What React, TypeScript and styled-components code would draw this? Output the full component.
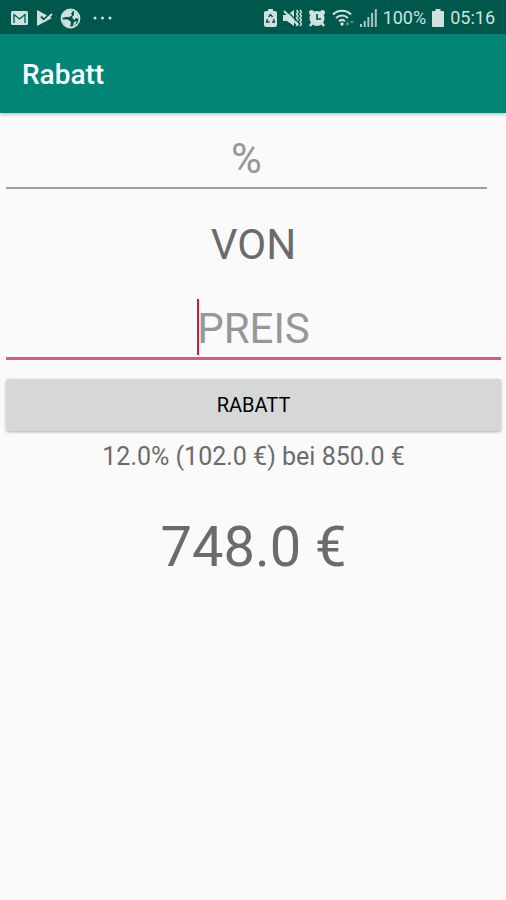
import React from "react";
import styled, { createGlobalStyle } from "styled-components";

const GlobalStyle = createGlobalStyle`
  *, *::before, *::after { box-sizing: border-box; }
  body {
    margin: 0;
    background: #fafafa;
    font-family: Roboto, "Liberation Sans", sans-serif;
  }
`;

const Screen = styled.div`
  min-height: 100vh;
  background: #fafafa;
  color: #6b6b6b;
`;

const StatusBar = styled.div`
  display: flex;
  justify-content: space-between;
  align-items: center;
  height: 34px;
  padding: 2px 11px 0 10px;
  background: #00574b;
  color: #cfe2de;
  font-size: 18px;
  line-height: 24px;
`;

const StatusGroup = styled.div<{ $gap: number }>`
  display: flex;
  align-items: center;
  gap: ${(p) => p.$gap}px;
`;

const Icon = styled.svg`
  display: block;
  flex: none;
  fill: currentColor;
`;

const MoreIcon = styled(Icon)`
  margin-left: 5px;
`;

const AppBar = styled.header`
  display: flex;
  align-items: center;
  height: 79px;
  padding: 3px 22px 0;
  background: #008577;
  box-shadow: 0 1px 4px rgba(0, 0, 0, 0.3);
`;

const Title = styled.h1`
  margin: 0;
  color: #fff;
  font-size: 28px;
  font-weight: 500;
  line-height: 32px;
`;

const Form = styled.form`
  display: flex;
  flex-direction: column;
  padding: 16px 5px 0 6px;
`;

const Field = styled.div<{ $active?: boolean }>`
  position: relative;
  margin-right: ${(p) => (p.$active ? 0 : 14)}px;
  border-bottom: ${(p) => (p.$active ? "3px solid #d65c78" : "2px solid #a0a0a0")};
`;

const TextInput = styled.input`
  display: block;
  width: 100%;
  height: 58px;
  padding: 0;
  border: 0;
  outline: 0;
  background: transparent;
  color: #6b6b6b;
  caret-color: transparent;
  font: 400 42px/56px Roboto, "Liberation Sans", sans-serif;
  text-align: center;
  &::placeholder {
    color: #979797;
    opacity: 1;
  }
`;

const Caret = styled.span`
  position: absolute;
  top: 0;
  left: calc(50% - 57px);
  width: 2px;
  height: 56px;
  background: #d1193f;
`;

const Joiner = styled.div`
  margin: 28px 0 26px;
  font-size: 42px;
  line-height: 56px;
  text-align: center;
`;

const SubmitButton = styled.button`
  height: 52px;
  margin-top: 19px;
  border: 0;
  border-radius: 3px;
  background: #d6d8d7;
  box-shadow: 0 1px 3px rgba(0, 0, 0, 0.3);
  color: #000;
  font: 400 20px/24px Roboto, "Liberation Sans", sans-serif;
`;

const Summary = styled.output`
  margin-top: 10px;
  font-size: 25px;
  line-height: 32px;
  text-align: center;
`;

const Total = styled.output`
  margin-top: 40px;
  font-size: 56px;
  line-height: 68px;
  text-align: center;
`;

const MailIcon = () => (
  <Icon width="19" height="16" viewBox="0 0 19 16">
    <rect x="1" y="1" width="17" height="14" rx="1.500" />
    <path d="M4 13V4.500l5.500 4.500L15 4.500V13" fill="none" stroke="#00574b" strokeWidth="1.300" />
  </Icon>
);

const PlayCheckIcon = () => (
  <Icon width="17" height="18" viewBox="0 0 17 18">
    <path d="M1 1l15 8L1 17z" />
    <path d="M5 7.500l3 3L15.500 3" fill="none" stroke="#00574b" strokeWidth="1.800" />
    <path d="M8 12.500L16 5" fill="none" stroke="currentColor" strokeWidth="1.800" />
  </Icon>
);

const GlobeIcon = () => (
  <Icon width="21" height="21" viewBox="0 0 21 21">
    <circle cx="10.500" cy="10.500" r="9" fill="none" stroke="currentColor" strokeWidth="1.800" />
    <path d="M2 8c1-3 4-5.500 8-6l3 1.500-2 2 1 2-3 1.500H5l-1 1-2-1z" />
    <path d="M2 11.500l6 0 3 2.500-1 5-4-1-3-4z" />
    <path d="M14 3l3 2 2 6-3-1-2 2-2-3 2-2zM14 14l3-1-2 4-2 1z" />
  </Icon>
);

const DotsIcon = () => (
  <MoreIcon width="20" height="4" viewBox="0 0 20 4">
    <circle cx="2" cy="2" r="1.500" />
    <circle cx="9.500" cy="2" r="1.500" />
    <circle cx="17" cy="2" r="1.500" />
  </MoreIcon>
);

const SaverIcon = () => (
  <Icon width="13" height="18" viewBox="0 0 13 18">
    <path d="M4 0h5v2h2a2 2 0 0 1 2 2v12a2 2 0 0 1-2 2H2a2 2 0 0 1-2-2V4a2 2 0 0 1 2-2h2z" />
    <path
      d="M4.500 8l2-2.500 2 2.500M9.500 10l1 3H8M5.500 13h-3l1-3"
      fill="none"
      stroke="#00574b"
      strokeWidth="1.400"
    />
  </Icon>
);

const MuteIcon = () => (
  <Icon width="19" height="18" viewBox="0 0 19 18">
    <path d="M0 6h4l7-5v16l-7-5H0z" />
    <path
      d="M13.500 1l1.500 2-1.500 2 1.500 2-1.500 2 1.500 2-1.500 2 1.500 2-1.500 2M17 1l1.500 2L17 5l1.500 2L17 9l1.500 2-1.500 2 1.500 2-1.500 2"
      fill="none"
      stroke="currentColor"
      strokeWidth="1.500"
    />
    <path d="M3 1l14 14" stroke="#00574b" strokeWidth="1.300" />
    <path d="M1 2l14 14" stroke="currentColor" strokeWidth="2" />
  </Icon>
);

const AlarmIcon = () => (
  <Icon width="18" height="18" viewBox="0 0 18 18">
    <circle cx="9" cy="9.500" r="7.500" />
    <circle cx="3.500" cy="3.500" r="2.500" />
    <circle cx="14.500" cy="3.500" r="2.500" />
    <path d="M2 17l3-4M16 17l-3-4" stroke="currentColor" strokeWidth="2.500" />
    <path d="M9 5v5h4" fill="none" stroke="#00574b" strokeWidth="1.700" />
  </Icon>
);

const WifiIcon = () => (
  <Icon width="22" height="18" viewBox="0 0 22 18">
    <path
      d="M1 5.500c5-5 13-5 18 0M4 9c3.500-3.500 8.500-3.500 12 0M7 12.200c2-1.800 4-1.800 6 0"
      fill="none"
      stroke="currentColor"
      strokeWidth="2"
    />
    <circle cx="10" cy="15" r="1.700" />
    <path d="M13.500 15l2-3 2 3-2 2zM18 12h4l-2 3z" opacity="0.400" />
  </Icon>
);

const SignalIcon = () => (
  <Icon width="17" height="18" viewBox="0 0 17 18">
    <path d="M0 15h2v3H0zM3.700 12h2v6h-2zM7.400 8h2v10h-2zM11.100 4h2v14h-2zM14.800 0h2v18h-2z" opacity="0.800" />
  </Icon>
);

const BatteryIcon = () => (
  <Icon width="12" height="18" viewBox="0 0 12 18">
    <path d="M3.500 0h5v2H11a1 1 0 0 1 1 1v14a1 1 0 0 1-1 1H1a1 1 0 0 1-1-1V3a1 1 0 0 1 1-1h2.500z" />
  </Icon>
);

export default function App() {
  return (
    <>
      <GlobalStyle />
      <Screen>
        <StatusBar>
          <StatusGroup $gap={7}>
            <MailIcon />
            <PlayCheckIcon />
            <GlobeIcon />
            <DotsIcon />
          </StatusGroup>
          <StatusGroup $gap={6}>
            <SaverIcon />
            <MuteIcon />
            <AlarmIcon />
            <WifiIcon />
            <SignalIcon />
            <span>100%</span>
            <BatteryIcon />
            <span>05:16</span>
          </StatusGroup>
        </StatusBar>
        <AppBar>
          <Title>Rabatt</Title>
        </AppBar>
        <Form onSubmit={(e: React.FormEvent) => e.preventDefault()}>
          <Field>
            <TextInput id="percent" aria-label="%" placeholder="%" inputMode="decimal" />
          </Field>
          <Joiner>VON</Joiner>
          <Field $active>
            <TextInput id="price" aria-label="PREIS" placeholder="PREIS" inputMode="decimal" />
            <Caret />
          </Field>
          <SubmitButton type="submit">RABATT</SubmitButton>
          <Summary htmlFor="percent price">12.0% (102.0 €) bei 850.0 €</Summary>
          <Total htmlFor="percent price">748.0 €</Total>
        </Form>
      </Screen>
    </>
  );
}
